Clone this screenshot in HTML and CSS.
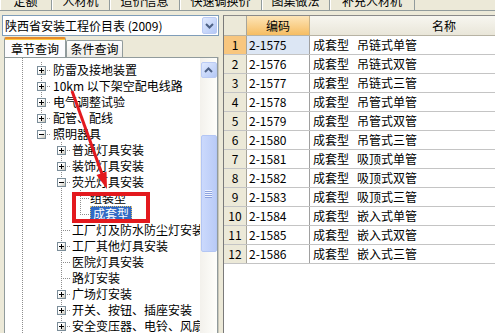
FILE: index.html
```html
<!DOCTYPE html>
<html lang="zh-CN">
<head>
    <meta charset="UTF-8">
    <title>定额查询</title>
    <link rel="stylesheet" href="styles.css">
</head>
<body>
    <div class="topbar">
        <div class="ttab t1"><span>定额</span></div>
        <div class="ttab t2"><span>人材机</span></div>
        <div class="ttab t3"><span>造价信息</span></div>
        <div class="ttab t4"><span>快速调换价</span></div>
        <div class="ttab t5"><span>图集做法</span></div>
        <div class="ttab t6"><span>补充人材机</span></div>
    </div>

    <div class="main">
        <div class="left">
            <div class="combo">
                <span class="combo-text">陕西省安装工程价目表 (2009)</span>
                <span class="combo-btn">
                    <svg width="9" height="6" viewBox="0 0 9 6"><path d="M1 1 L4.5 4.5 L8 1" fill="none" stroke="#4D6185" stroke-width="2"/></svg>
                </span>
            </div>

            <div class="qtabs">
                <div class="qtab active">章节查询</div>
                <div class="qtab">条件查询</div>
            </div>

            <div class="treebox">
                <ul class="tree">
                    <li class="n1"><div class="row"><i class="box plus"></i><span>防雷及接地装置</span></div></li>
                    <li class="n1"><div class="row"><i class="box plus"></i><span>10km 以下架空配电线路</span></div></li>
                    <li class="n1"><div class="row"><i class="box plus"></i><span>电气调整试验</span></div></li>
                    <li class="n1"><div class="row"><i class="box plus"></i><span>配管、配线</span></div></li>
                    <li class="n1 last"><div class="row"><i class="box"></i><span>照明器具</span></div>
                        <ul>
                            <li class="n2"><div class="row"><i class="box plus"></i><span>普通灯具安装</span></div></li>
                            <li class="n2"><div class="row"><i class="box plus"></i><span>装饰灯具安装</span></div></li>
                            <li class="n2"><div class="row"><i class="box"></i><span>荧光灯具安装</span></div>
                                <ul>
                                    <li class="n3"><div class="row"><i class="stub"></i><span>组装型</span></div></li>
                                    <li class="n3 last"><div class="row"><i class="stub"></i><span class="sel">成套型</span></div></li>
                                </ul>
                            </li>
                            <li class="n2"><div class="row"><i class="stub"></i><span>工厂灯及防水防尘灯安装</span></div></li>
                            <li class="n2"><div class="row"><i class="box plus"></i><span>工厂其他灯具安装</span></div></li>
                            <li class="n2"><div class="row"><i class="stub"></i><span>医院灯具安装</span></div></li>
                            <li class="n2"><div class="row"><i class="stub"></i><span>路灯安装</span></div></li>
                            <li class="n2"><div class="row"><i class="box plus"></i><span>广场灯安装</span></div></li>
                            <li class="n2"><div class="row"><i class="box plus"></i><span>开关、按钮、插座安装</span></div></li>
                            <li class="n2"><div class="row"><i class="box plus"></i><span>安全变压器、电铃、风扇安装</span></div></li>
                        </ul>
                    </li>
                </ul>
                <div class="vscroll">
                    <div class="sb-up">
                        <svg width="9" height="6" viewBox="0 0 9 6"><path d="M1 5 L4.5 1.5 L8 5" fill="none" stroke="#4D6185" stroke-width="2"/></svg>
                    </div>
                    <div class="sb-thumb"><i class="grip"></i></div>
                </div>
            </div>
        </div>

        <div class="grid">
            <div class="grow ghead">
                <div class="cno"></div>
                <div class="ccode hot">编码</div>
                <div class="cname">名称</div>
            </div>
            <div class="grow cur"><div class="cno">1</div><div class="ccode">2-1575</div><div class="cname">成套型<b class="gap"></b>吊链式单管</div></div>
            <div class="grow"><div class="cno">2</div><div class="ccode">2-1576</div><div class="cname">成套型<b class="gap"></b>吊链式双管</div></div>
            <div class="grow"><div class="cno">3</div><div class="ccode">2-1577</div><div class="cname">成套型<b class="gap"></b>吊链式三管</div></div>
            <div class="grow"><div class="cno">4</div><div class="ccode">2-1578</div><div class="cname">成套型<b class="gap"></b>吊管式单管</div></div>
            <div class="grow"><div class="cno">5</div><div class="ccode">2-1579</div><div class="cname">成套型<b class="gap"></b>吊管式双管</div></div>
            <div class="grow"><div class="cno">6</div><div class="ccode">2-1580</div><div class="cname">成套型<b class="gap"></b>吊管式三管</div></div>
            <div class="grow"><div class="cno">7</div><div class="ccode">2-1581</div><div class="cname">成套型<b class="gap"></b>吸顶式单管</div></div>
            <div class="grow"><div class="cno">8</div><div class="ccode">2-1582</div><div class="cname">成套型<b class="gap"></b>吸顶式双管</div></div>
            <div class="grow"><div class="cno">9</div><div class="ccode">2-1583</div><div class="cname">成套型<b class="gap"></b>吸顶式三管</div></div>
            <div class="grow"><div class="cno">10</div><div class="ccode">2-1584</div><div class="cname">成套型<b class="gap"></b>嵌入式单管</div></div>
            <div class="grow"><div class="cno">11</div><div class="ccode">2-1585</div><div class="cname">成套型<b class="gap"></b>嵌入式双管</div></div>
            <div class="grow"><div class="cno">12</div><div class="ccode">2-1586</div><div class="cname">成套型<b class="gap"></b>嵌入式三管</div></div>
        </div>
    </div>

    <!-- red marks drawn over the screenshot -->
    <svg class="marks" width="495" height="333" viewBox="0 0 495 333">
        <line x1="72" y1="91" x2="102" y2="174" stroke="#E3191E" stroke-width="3"/>
        <polygon points="107,189 106.5,171.5 96.5,175" fill="#E3191E"/>
        <rect x="74" y="194" width="74" height="27" fill="none" stroke="#E3191E" stroke-width="4"/>
    </svg>
</body>
</html>
```

FILE: styles.css
```css
body {
    margin: 0;
    width: 495px;
    height: 333px;
    overflow: hidden;
    position: relative;
    background: #ECE9D8;
    color: #000;
    font-family: "Noto Sans CJK SC", "DejaVu Sans", sans-serif;
    font-size: 12px;
}

/* clipped tab strip at the very top */
.topbar {
    display: flex;
    height: 11px;
    box-sizing: border-box;
    overflow: hidden;
    border-bottom: 1px solid #919B9C;
}

.ttab {
    box-sizing: border-box;
    border-right: 1px solid #919B9C;
    box-shadow: inset 1px 0 #fff;
    text-align: center;
}

.ttab span {
    display: block;
    line-height: 12px;
    margin-top: -5px;
}

.t1 { width: 52px; }
.t2 { width: 58px; }
.t3 { width: 70px; }
.t4 { width: 82px; }
.t5 { width: 68px; }
.t6 { width: 85px; }

.main {
    display: flex;
    height: 322px;
}

.left {
    width: 220px;
    flex: none;
    display: flex;
    flex-direction: column;
}

.combo {
    margin: 4px 0 0 2px;
    width: 217px;
    height: 21px;
    box-sizing: border-box;
    border: 1px solid #7F9DB9;
    background: #fff;
    display: flex;
    align-items: center;
    justify-content: space-between;
}

.combo-text {
    padding-left: 2px;
    line-height: 19px;
    white-space: nowrap;
}

.combo-btn,
.sb-up {
    width: 15px;
    height: 17px;
    box-sizing: border-box;
    border: 1px solid #BBCBF4;
    border-radius: 2px;
    background: linear-gradient(135deg, #E1EAFE, #B4C8F6);
    display: flex;
    align-items: center;
    justify-content: center;
}

.combo-btn {
    margin-right: 1px;
}

.qtabs {
    display: flex;
    align-items: flex-end;
    height: 20px;
    margin-top: 1px;
    padding-left: 4px;
}

.qtab {
    width: 57px;
    height: 17px;
    box-sizing: border-box;
    border: 1px solid #919B9C;
    border-bottom: none;
    border-radius: 2px 2px 0 0;
    background: linear-gradient(#FFFFFF, #ECEBE6);
    text-align: center;
    line-height: 16px;
}

.qtab.active {
    width: 62px;
    height: 20px;
    border-top: 2px solid #E68B2C;
    box-shadow: inset 0 1px #FFC73C;
    background: #FCFCFE;
    line-height: 19px;
}

.treebox {
    flex: 1;
    margin-left: 4px;
    width: 214px;
    box-sizing: border-box;
    border: 1px solid #919B9C;
    border-bottom: none;
    box-shadow: 1px 0 #C9C7BA;
    background: #fff;
    display: flex;
    overflow: hidden;
}

/* tree view */
.tree,
.tree ul {
    list-style: none;
    margin: 0;
    padding: 0;
}

.tree {
    width: 195px;
    flex: none;
    overflow: hidden;
    padding-top: 4px;
    background: repeating-linear-gradient(#8E8E8E 0 1px, transparent 1px 2px) no-repeat 17px 0 / 1px 100%;
}

.tree li {
    background-image: repeating-linear-gradient(#8E8E8E 0 1px, transparent 1px 2px);
    background-repeat: no-repeat;
    background-size: 1px 100%;
}

.tree li.last {
    background-size: 1px 8px;
}

.row {
    height: 16px;
    display: flex;
    align-items: center;
    white-space: nowrap;
    line-height: 16px;
    background-image: repeating-linear-gradient(to right, #8E8E8E 0 1px, transparent 1px 2px);
    background-repeat: no-repeat;
    background-size: 9px 1px;
}

.n1 { background-position: 36px 0; }
.n2 { background-position: 56px 0; }
.n3 { background-position: 75px 0; }

.n1 > .row { padding-left: 32px; background-position: 36px 8px; }
.n2 > .row { padding-left: 52px; background-position: 56px 8px; }
.n3 > .row { padding-left: 71px; background-position: 75px 8px; }

.n1 > .row span { margin-left: 7px; }
.n2 > .row span { margin-left: 6px; }
.n3 > .row span { margin-left: 5px; }

.box,
.stub {
    width: 9px;
    height: 9px;
    flex: none;
    box-sizing: border-box;
}

.box {
    position: relative;
    border: 1px solid #7B8D99;
    background: linear-gradient(135deg, #FFFFFF 40%, #C6C3B6);
}

.box::before,
.box.plus::after {
    content: "";
    position: absolute;
    background: #000;
}

.box::before {
    left: 1px;
    top: 3px;
    width: 5px;
    height: 1px;
}

.box.plus::after {
    left: 3px;
    top: 1px;
    width: 1px;
    height: 5px;
}

.tree .sel {
    margin-left: 2px;
    padding: 0 3px;
    background: #316AC5;
    color: #fff;
    outline: 1px dotted #E0C070;
    outline-offset: -1px;
}

/* XP scroll bar */
.vscroll {
    width: 17px;
    flex: none;
    background: linear-gradient(to right, #F3F1EC, #FEFEFB);
    display: flex;
    flex-direction: column;
    align-items: center;
}

.sb-up {
    margin-top: 4px;
    width: 16px;
    height: 16px;
}

.sb-thumb {
    margin-top: 57px;
    width: 16px;
    height: 117px;
    box-sizing: border-box;
    border: 1px solid #B3C6F4;
    border-radius: 2px;
    background: linear-gradient(to right, #CBD9FC, #B9CBF7);
    display: flex;
    align-items: center;
    justify-content: center;
}

.grip {
    width: 7px;
    height: 8px;
    background: repeating-linear-gradient(#EEF3FF 0 1px, #8CA2DE 1px 2px);
}

/* data grid */
.grid {
    flex: 1;
    margin: 4px 0 0 3px;
    border-top: 1px solid #8A8A8A;
    border-left: 1px solid #7A7A7A;
    background: #fff;
    overflow: hidden;
}

.grow {
    display: flex;
    height: 19px;
    box-sizing: border-box;
    border-bottom: 1px solid #C4C4C4;
    line-height: 18px;
    white-space: nowrap;
}

.grow > div {
    flex: none;
    box-sizing: border-box;
}

.ghead {
    height: 20px;
    border-bottom-color: #B7B3A4;
    line-height: 19px;
}

.cno {
    width: 23px;
    border-right: 1px solid #A7A59A;
    background: #ECE9D8;
    text-align: center;
}

.ccode {
    width: 63px;
    padding-left: 2px;
    border-right: 1px solid #A0A0A0;
}

.cname {
    width: 265px;
    padding-left: 3px;
}

.cname .gap {
    display: inline-block;
    width: 8px;
}

.ghead .cname {
    background: linear-gradient(#F7F6F0, #E9E6D9);
    text-align: center;
}

.ghead .ccode.hot {
    padding: 0;
    text-align: center;
    background: linear-gradient(#FDE5B8, #F6BD62);
    border-right-color: #C9B48A;
}

.grow.cur .cno {
    background: #F8C67E;
}

.grow.cur .ccode {
    background: #DCE6F4;
}

.marks {
    position: absolute;
    left: 0;
    top: 0;
    pointer-events: none;
}
```
